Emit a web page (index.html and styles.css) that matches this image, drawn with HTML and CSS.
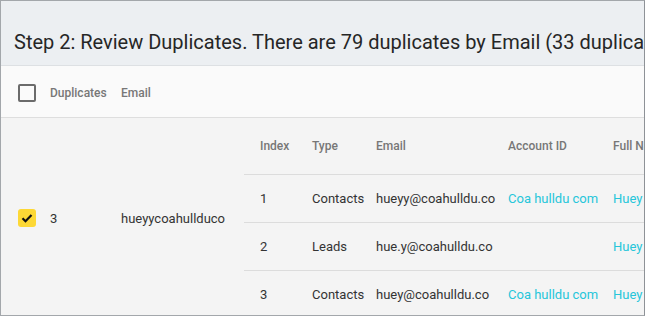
FILE: index.html
```html
<!DOCTYPE html>
<html lang="en">
<head>
  <meta charset="UTF-8">
  <title>Review Duplicates</title>
  <link rel="stylesheet" href="styles.css">
</head>
<body>
  <div class="panel">
    <div class="title">Step 2: Review Duplicates. There are 79 duplicates by Email (33 duplicate groups)</div>

    <!-- group table header -->
    <div class="group-head">
      <div class="cell-check"><span class="box"></span></div>
      <div class="cell-dup">Duplicates</div>
      <div class="cell-key">Email</div>
    </div>

    <!-- one group -->
    <div class="group-row">
      <div class="cell-check">
        <span class="box checked">
          <svg viewBox="0 0 18 18" width="18" height="18"><path d="M4.5 9.2l3 3 6-6.2" fill="none" stroke="#111" stroke-width="2.2"/></svg>
        </span>
      </div>
      <div class="cell-dup">3</div>
      <div class="cell-key">hueyycoahullduco</div>
      <div class="cell-records">
        <table class="records">
          <colgroup>
            <col class="c-index"><col class="c-type"><col class="c-email"><col class="c-account"><col class="c-name">
          </colgroup>
          <thead>
            <tr><th>Index</th><th>Type</th><th>Email</th><th>Account ID</th><th>Full Name</th></tr>
          </thead>
          <tbody>
            <tr><td>1</td><td>Contacts</td><td>hueyy@coahulldu.co</td><td><a>Coa hulldu com</a></td><td><a>Huey Hulldu</a></td></tr>
            <tr><td>2</td><td>Leads</td><td>hue.y@coahulldu.co</td><td></td><td><a>Huey Hulldu</a></td></tr>
            <tr><td>3</td><td>Contacts</td><td>huey@coahulldu.co</td><td><a>Coa hulldu com</a></td><td><a>Huey Hulldu</a></td></tr>
          </tbody>
        </table>
      </div>
    </div>
  </div>
</body>
</html>
```

FILE: styles.css
```css
body{
  margin:0; background:#fff;
  font-family:Roboto,"Noto Sans",sans-serif; color:#333;
}
.panel{
  width:643px; height:314px; overflow:hidden;
  border:1px solid #a3a7ab; border-right-color:#8e9297;
  background:#f4f4f4;
}
.title{
  height:65px; box-sizing:border-box;
  padding:29px 0 0 13px;
  background:#eceff2; border-bottom:1px solid #dde0e3;
  font-size:20px; line-height:24px; color:#262626;
  white-space:nowrap;
}

.group-head{
  display:flex; align-items:center;
  height:52px; box-sizing:border-box; padding-top:3px;
  background:#fafafa;
  border-bottom:1px solid #dedede;
  font-size:12px; font-weight:500; color:#777;
}
.group-row{
  display:flex; align-items:center;
  font-size:13px; color:#333;
}
.group-head > div,.group-row > div{flex-shrink:0}
.cell-check{width:49px;padding-left:17px;box-sizing:border-box;display:flex}
.cell-dup{width:71px}
.cell-key{width:123px}

.box{
  width:18px;height:18px;box-sizing:border-box;
  border:2px solid #6b6b6b;border-radius:2px;display:block;
}
.box.checked{background:#fdd835;border:none;border-radius:3px}
.box svg{display:block}

.cell-records{align-self:stretch}
.records{border-collapse:collapse;table-layout:fixed;width:473px}
.c-index{width:52px}
.c-type{width:64px}
.c-email{width:132px}
.c-account{width:105px}
.c-name{width:120px}
.records th,.records td{
  text-align:left;padding:0 0 0 16px;white-space:nowrap;
}
.records th{
  height:56px;font-size:12px;font-weight:500;color:#777;
}
.records td{
  height:47px;border-top:1px solid #dcdcdc;
}
.records a{color:#26c6da}
```
